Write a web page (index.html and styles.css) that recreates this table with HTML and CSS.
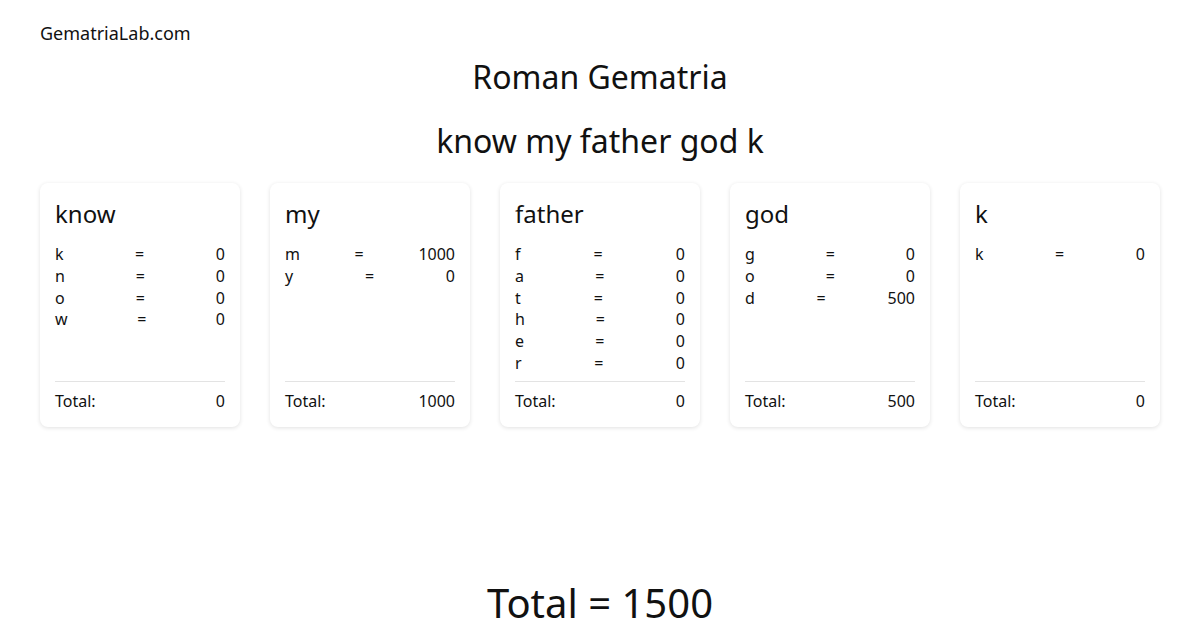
FILE: index.html
```html
<!DOCTYPE html>
<html lang="en">
<head>
<meta charset="utf-8">
<title>Roman Gematria</title>
<link rel="stylesheet" href="styles.css">
</head>
<body>
<div class="page">
  <header class="site">GematriaLab.com</header>
  <h1 class="title">Roman Gematria</h1>
  <h2 class="phrase">know my father god k</h2>
  <div class="cards">
    <div class="card">
      <div class="word">know</div>
      <div class="rows">
        <div class="row"><span>k</span><span>=</span><span>0</span></div>
        <div class="row"><span>n</span><span>=</span><span>0</span></div>
        <div class="row"><span>o</span><span>=</span><span>0</span></div>
        <div class="row"><span>w</span><span>=</span><span>0</span></div>
      </div>
      <div class="total"><span>Total:</span><span>0</span></div>
    </div>
    <div class="card">
      <div class="word">my</div>
      <div class="rows">
        <div class="row"><span>m</span><span>=</span><span>1000</span></div>
        <div class="row"><span>y</span><span>=</span><span>0</span></div>
      </div>
      <div class="total"><span>Total:</span><span>1000</span></div>
    </div>
    <div class="card">
      <div class="word">father</div>
      <div class="rows">
        <div class="row"><span>f</span><span>=</span><span>0</span></div>
        <div class="row"><span>a</span><span>=</span><span>0</span></div>
        <div class="row"><span>t</span><span>=</span><span>0</span></div>
        <div class="row"><span>h</span><span>=</span><span>0</span></div>
        <div class="row"><span>e</span><span>=</span><span>0</span></div>
        <div class="row"><span>r</span><span>=</span><span>0</span></div>
      </div>
      <div class="total"><span>Total:</span><span>0</span></div>
    </div>
    <div class="card">
      <div class="word">god</div>
      <div class="rows">
        <div class="row"><span>g</span><span>=</span><span>0</span></div>
        <div class="row"><span>o</span><span>=</span><span>0</span></div>
        <div class="row"><span>d</span><span>=</span><span>500</span></div>
      </div>
      <div class="total"><span>Total:</span><span>500</span></div>
    </div>
    <div class="card">
      <div class="word">k</div>
      <div class="rows">
        <div class="row"><span>k</span><span>=</span><span>0</span></div>
      </div>
      <div class="total"><span>Total:</span><span>0</span></div>
    </div>
  </div>
  <div class="grand">Total = 1500</div>
</div>
</body>
</html>
```

FILE: styles.css
```css
* { box-sizing: border-box; }
html, body { margin: 0; padding: 0; background: #fff; }
body {
  font-family: "Noto Sans", "Open Sans", sans-serif;
  color: #111;
}
.page {
  height: 630px;
  overflow: hidden;
  display: flex;
  flex-direction: column;
  padding: 21px 40px 2px;
}
.site {
  font-size: 18px;
  line-height: 24px;
  height: 24px;
}
.title {
  margin: 10px 0 0;
  font-size: 32px;
  font-weight: 400;
  line-height: 44px;
  text-align: center;
}
.phrase {
  margin: 20px 0 0;
  font-size: 32px;
  font-weight: 400;
  line-height: 44px;
  text-align: center;
}
.cards {
  margin-top: 20px;
  display: flex;
  gap: 30px;
}
.card {
  width: 200px;
  height: 244px;
  display: flex;
  flex-direction: column;
  padding: 15px 15px 14px;
  background: #fff;
  border-radius: 8px;
  box-shadow: 0 1px 4px rgba(0, 0, 0, 0.12);
}
.word {
  font-size: 24px;
  line-height: 32px;
  margin-bottom: 14px;
}
.rows { flex: 1; }
.row, .total {
  display: flex;
  justify-content: space-between;
  font-size: 16px;
  line-height: 21.8px;
}
.total {
  border-top: 1px solid #e3e3e3;
  padding-top: 9px;
}
.grand {
  margin-top: auto;
  text-align: center;
  font-size: 40px;
  line-height: 50px;
}
```
